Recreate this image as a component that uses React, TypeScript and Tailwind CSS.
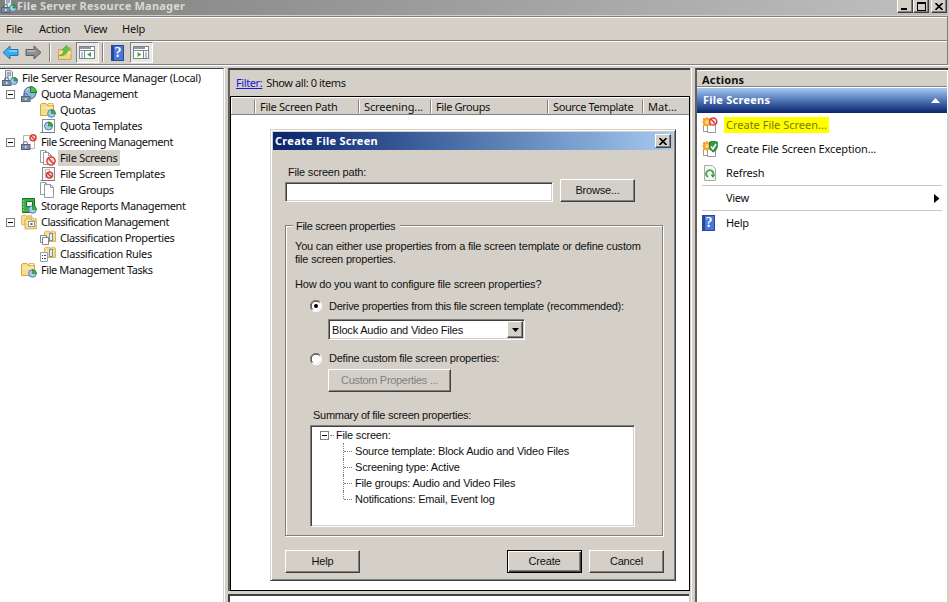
import clsx from 'clsx';
import type { ReactNode } from 'react';

const RAISED =
  'border border-t-white border-l-white border-r-[#404040] border-b-[#404040] shadow-[inset_-1px_-1px_0_#808080]';
const SUNKEN =
  'border border-t-[#808080] border-l-[#808080] border-r-white border-b-white shadow-[inset_1px_1px_0_#404040,inset_-1px_-1px_0_#d4d0c8]';

/* ---------- icons ---------- */

function Svg({ children, w = 16, h = 16 }: { children: ReactNode; w?: number; h?: number }) {
  return (
    <svg width={w} height={h} viewBox={`0 0 ${w} ${h}`} className="block shrink-0">
      {children}
    </svg>
  );
}

function Pie({ x, y, r }: { x: number; y: number; r: number }) {
  return (
    <g>
      <circle cx={x} cy={y} r={r} fill="#a9cbe6" stroke="#4a7fb5" />
      <path d={`M${x} ${y}V${y - r}A${r} ${r} 0 0 1 ${x + r} ${y}Z`} fill="#35b535" stroke="#1c7a2a" strokeWidth="0.6" />
    </g>
  );
}

function Lock() {
  return (
    <g>
      <path d="M2.5 11V9.5a2 2 0 0 1 4 0V11" fill="none" stroke="#5c6b7c" />
      <rect x="0.5" y="10.5" width="8.5" height="5" fill="#7b8da1" stroke="#56667a" />
      <path d="M4 12h1.5v2H4z" fill="#dfe6ee" />
    </g>
  );
}

function Ban({ x, y, r }: { x: number; y: number; r: number }) {
  return (
    <g>
      <circle cx={x} cy={y} r={r} fill="#fbe3e0" stroke="#d5443f" strokeWidth="1.5" />
      <path d={`M${x - r * 0.7} ${y - r * 0.7}L${x + r * 0.7} ${y + r * 0.7}`} stroke="#d5443f" strokeWidth="1.5" />
    </g>
  );
}

function Folder({ x = 0, y = 0, s = 1 }: { x?: number; y?: number; s?: number }) {
  return (
    <g transform={`translate(${x} ${y}) scale(${s})`}>
      <path d="M0.5 13.5V2.5L2 1.5h4l1 1.5h6.5v10.5z" fill="#f5dc8e" stroke="#d3a947" />
      <path d="M8 1.5h5v2H8z" fill="#fff5cf" stroke="#cf9f35" strokeWidth="0.7" />
      <path d="M1.5 6h11" stroke="#fdf0bd" />
    </g>
  );
}

function Page({ x, y, w = 9, h = 12 }: { x: number; y: number; w?: number; h?: number }) {
  return (
    <path
      d={`M${x} ${y}h${w - 3}l3 3v${h - 3}h${-w}zM${x + w - 3} ${y}v3h3`}
      fill="#fff"
      stroke="#8a9099"
      strokeWidth="0.9"
    />
  );
}

function ServerIcon() {
  return (
    <Svg>
      <path d="M3.5 0.5h5l2 1.500v9h-7z" fill="#e5e9ed" stroke="#7c8894" />
      <path d="M5 3h4M5 5h4" stroke="#5b7288" />
      <path d="M5 7h2" stroke="#35b535" />
      <Lock />
      <Pie x={12} y={11} r={3.5} />
    </Svg>
  );
}

function QuotaIcon() {
  return (
    <Svg>
      <circle cx="9" cy="7" r="6" fill="#8db5e0" stroke="#3a669b" />
      <path d="M9.5 6.500V0.500A6 6 0 0 1 15.500 6.500z" fill="#4cc24c" stroke="#1c7a2a" />
      <path d="M5 4.500a5 5 0 0 1 3-2" fill="none" stroke="#d5e6f7" />
      <Lock />
    </Svg>
  );
}

function QuotaFolderIcon() {
  return (
    <Svg>
      <Folder />
      <Pie x={11.5} y={11.5} r={3.8} />
    </Svg>
  );
}

function QuotaTemplateIcon() {
  return (
    <Svg>
      <rect x="2.5" y="1.5" width="12" height="13" fill="#fff" stroke="#8b8b8b" />
      <path d="M0.5 14.5h14" stroke="#767676" />
      <Pie x={8.5} y={8} r={4} />
    </Svg>
  );
}

function ScreeningIcon() {
  return (
    <Svg>
      <path d="M2.5 1.5h11v13h-11z" fill="#fff" stroke="#b5b5b5" />
      <Lock />
      <Ban x={12} y={3.8} r={3} />
    </Svg>
  );
}

function FileScreensIcon() {
  return (
    <Svg>
      <Page x={0.5} y={0.5} w={8} />
      <Page x={3.5} y={2.5} w={8} />
      <Ban x={11} y={11} r={4.1} />
    </Svg>
  );
}

function ScreenTemplateIcon() {
  return (
    <Svg>
      <rect x="2.5" y="1.5" width="12" height="13" fill="#f6f6f6" stroke="#8a8a8a" />
      <path d="M0.5 14.5h14" stroke="#767676" />
      <path d="M5.5 3.5h4v8h-4z" fill="#fff" stroke="#999" strokeWidth="0.7" />
      <Ban x={9.5} y={9} r={3} />
    </Svg>
  );
}

function FileGroupsIcon() {
  return (
    <Svg>
      <Page x={0.5} y={0.5} w={8} />
      <Page x={4.5} y={2.5} w={9} h={13} />
    </Svg>
  );
}

function ReportsIcon() {
  return (
    <Svg>
      <path d="M1.5 0.5h12v14h-12z" fill="#3fae49" stroke="#17702a" />
      <path d="M0 3h3M0 6h3M0 9h3M0 12h3" stroke="#9fd6a4" />
      <path d="M5.5 3.5h6v5h-6z" fill="#e6f4e7" stroke="#17702a" />
      <Pie x={11.5} y={11.5} r={3.8} />
    </Svg>
  );
}

function ClassificationIcon() {
  return (
    <Svg>
      <Folder s={0.8} />
      <Folder x={3.5} y={3} s={0.88} />
      <rect x="7.5" y="7.5" width="6" height="5" fill="#fff" stroke="#8c96a3" />
      <path d="M9 10h3M10.5 9v2" stroke="#3d6c99" />
    </Svg>
  );
}

function ClassPropsIcon() {
  return (
    <Svg>
      <Folder x={4} s={0.85} />
      <rect x="9.5" y="3.5" width="3" height="7" fill="#e8eef5" stroke="#7d8da0" />
      <path d="M0.5 5.5h6v7h-6z" fill="#fff" stroke="#7b8794" />
      <path d="M2.5 7.5h6v7h-6z" fill="#fff" stroke="#7b8794" />
    </Svg>
  );
}

function ClassRulesIcon() {
  return (
    <Svg>
      <Folder x={4} s={0.85} />
      <rect x="9.5" y="3.5" width="3" height="7" fill="#e8eef5" stroke="#7d8da0" />
      <path d="M0.5 6.5h7v9h-7z" fill="#fff" stroke="#9aa3ad" />
      <path d="M2 9.5h1M4 9.5h2M2 12.5h1M4 12.5h2" stroke="#444" />
    </Svg>
  );
}

function Burst() {
  return (
    <g>
      <path d="M1 1h8v8H1z" fill="#fbb84a" />
      <path d="M5 0v10M0 5h10M1.500 1.500l7 7M8.500 1.500l-7 7" stroke="#f39a1c" strokeWidth="1.2" />
      <circle cx="5" cy="5" r="2" fill="#ffd873" />
    </g>
  );
}

function NewScreenIcon() {
  return (
    <Svg>
      <Page x={1.5} y={2.5} w={8} h={12} />
      <Page x={5.5} y={3.5} w={8} h={12} />
      <Burst />
      <Ban x={11.2} y={4.5} r={3.6} />
    </Svg>
  );
}

function NewExceptionIcon() {
  return (
    <Svg>
      <Page x={1.5} y={2.5} w={8} h={12} />
      <Page x={5.5} y={3.5} w={8} h={12} />
      <Burst />
      <path
        d="M7.5 1l3.5-.7 4.300.7v4.500c0 2.500-2 4.500-4 5.500-2-1-3.800-3-3.800-5.500z"
        fill="#2f9e3c"
        stroke="#176b27"
        strokeWidth="0.8"
      />
      <path d="M9 5.500l2 2.500 3-5" fill="none" stroke="#fff" strokeWidth="1.5" />
    </Svg>
  );
}

function RefreshIcon() {
  return (
    <Svg>
      <path d="M2.5 0.5h8l3 3v12h-11z" fill="#f2f8f1" stroke="#a3afa3" />
      <path d="M6 12A3.600 3.600 0 1 1 11.300 9.500" fill="none" stroke="#4aa555" strokeWidth="1.8" />
      <path d="M8.500 9.500h5L11 13z" fill="#3a9b45" />
    </Svg>
  );
}

function HelpIcon() {
  return (
    <span className="flex h-4 w-[13px] shrink-0 items-center justify-center border border-[#27479f] bg-linear-to-r from-[#27479f] from-15% to-[#4a78d6] to-20% pl-px font-['Liberation_Serif',serif] text-[14px] leading-none font-bold text-white">
      ?
    </span>
  );
}

function ArrowIcon({ forward = false }: { forward?: boolean }) {
  return (
    <Svg w={17} h={15}>
      <path
        d={forward ? 'M16 7.5L9 1v3.500H1v6h8V14z' : 'M1 7.5L8 1v3.500h8v6H8V14z'}
        fill={forward ? '#8f8f8f' : '#35adf0'}
        stroke={forward ? '#5d5d5d' : '#2a76b0'}
        strokeLinejoin="round"
      />
      <path d={forward ? 'M2 6h8' : 'M7 6h8'} stroke={forward ? '#bcbcbc' : '#8fd8fb'} strokeWidth="1.5" />
    </Svg>
  );
}

function FolderUpIcon() {
  return (
    <Svg>
      <path d="M1.5 14.5v-10h5l1-1.500h6.500v11.500z" fill="#f3d584" stroke="#c9a356" />
      <path d="M2 8h12" stroke="#fdeeb8" />
      <path
        d="M2.500 10.500C5.500 9.500 7 7.500 7 5H5L9.500 0.500 13 5h-2.500c0 3.500-3 6-8 5.500z"
        fill="#5fc93e"
        stroke="#4a9e36"
        strokeWidth="0.7"
      />
    </Svg>
  );
}

function PaneIcon({ right = false }: { right?: boolean }) {
  return (
    <Svg w={17} h={15}>
      <rect x="0.5" y="1.5" width="15" height="12" fill="#fff" stroke="#7b858f" />
      <path d="M1 3h11" stroke="#8796a8" strokeWidth="2" />
      <path d="M1 5.5h15" stroke="#7b858f" />
      <path d={right ? 'M10.5 5v9' : 'M5.5 5v9'} stroke="#7b858f" />
      <path d={right ? 'M12 8h2M12 10h2M12 12h2' : 'M2 8h2M2 10h2M2 12h2'} stroke="#6582a6" />
      <path d={right ? 'M4.500 7l4 2.500-4 2.500z' : 'M12 7l-4 2.500 4 2.500z'} fill="#3fab3f" />
    </Svg>
  );
}

/* ---------- main window ---------- */

function CaptionButton({ children, className }: { children: ReactNode; className?: string }) {
  return (
    <span className={clsx('flex h-[14px] w-4 items-center justify-center bg-[#d4d0c8]', RAISED, className)}>
      {children}
    </span>
  );
}

function CloseGlyph() {
  return (
    <Svg w={8} h={7}>
      <path d="M0.5 0l7 7M7.5 0l-7 7" stroke="#000" strokeWidth="1.600" />
    </Svg>
  );
}

function TitleBar() {
  return (
    <div className="flex h-[15px] items-start bg-linear-to-r from-[#808080] to-[#c0c0c0] pr-[2px]">
      <div className="-mt-[3px] ml-px">
        <ServerIcon />
      </div>
      <span className="h-[15px] text-[11px] leading-[12px] font-bold tracking-[0.2px] text-[#dbd8d1]">
        File Server Resource Manager
      </span>
      <div className="-mt-px ml-auto flex">
        <CaptionButton>
          <span className="mt-[6px] mr-[2px] h-[2px] w-[6px] bg-black" />
        </CaptionButton>
        <CaptionButton>
          <span className="h-[9px] w-[9px] border border-t-2 border-black" />
        </CaptionButton>
        <CaptionButton className="ml-[2px]">
          <CloseGlyph />
        </CaptionButton>
      </div>
    </div>
  );
}

function MenuBar() {
  return (
    <div className="mt-px mr-px h-6 border-t border-r border-[#808080]">
      <div className="flex h-[23px] border-t border-white pl-[6px] leading-[22px] tracking-[-0.2px]">
        <span className="w-[33px]">File</span>
        <span className="w-[45px]">Action</span>
        <span className="w-[38px]">View</span>
        <span>Help</span>
      </div>
    </div>
  );
}

function Separator() {
  return <span className="h-[19px] w-[2px] border-l border-[#808080] bg-white" />;
}

function Pressed({ children }: { children: ReactNode }) {
  return (
    <span className="flex h-[21px] w-[23px] items-center justify-center border border-t-[#808080] border-r-white border-b-white border-l-[#808080] bg-[#eae8e3]">
      {children}
    </span>
  );
}

function ToolBar() {
  return (
    <div className="mr-px flex h-[25px] items-center border border-l-0 border-[#808080] pl-[2px] shadow-[inset_0_1px_0_#fff]">
      <ArrowIcon />
      <span className="w-[6px]" />
      <ArrowIcon forward />
      <span className="w-[7px]" />
      <Separator />
      <span className="w-[6px]" />
      <FolderUpIcon />
      <span className="w-[3px]" />
      <Pressed>
        <PaneIcon />
      </Pressed>
      <span className="w-[3px]" />
      <Separator />
      <span className="w-[7px]" />
      <HelpIcon />
      <span className="w-[6px]" />
      <Pressed>
        <PaneIcon right />
      </Pressed>
    </div>
  );
}

interface TreeNode {
  label: string;
  level: number;
  icon: ReactNode;
  tracking: string;
  open?: boolean;
  selected?: boolean;
}

const TREE: TreeNode[] = [
  { label: 'File Server Resource Manager (Local)', level: 0, icon: <ServerIcon />, tracking: 'tracking-[-0.3px]' },
  { label: 'Quota Management', level: 1, icon: <QuotaIcon />, tracking: 'tracking-[-0.5px]', open: true },
  { label: 'Quotas', level: 2, icon: <QuotaFolderIcon />, tracking: 'tracking-[-0.35px]' },
  { label: 'Quota Templates', level: 2, icon: <QuotaTemplateIcon />, tracking: 'tracking-[-0.4px]' },
  { label: 'File Screening Management', level: 1, icon: <ScreeningIcon />, tracking: 'tracking-[-0.48px]', open: true },
  { label: 'File Screens', level: 2, icon: <FileScreensIcon />, tracking: 'tracking-[-0.25px]', selected: true },
  { label: 'File Screen Templates', level: 2, icon: <ScreenTemplateIcon />, tracking: 'tracking-[-0.3px]' },
  { label: 'File Groups', level: 2, icon: <FileGroupsIcon />, tracking: 'tracking-[-0.42px]' },
  { label: 'Storage Reports Management', level: 1, icon: <ReportsIcon />, tracking: 'tracking-[-0.42px]' },
  { label: 'Classification Management', level: 1, icon: <ClassificationIcon />, tracking: 'tracking-[-0.48px]', open: true },
  { label: 'Classification Properties', level: 2, icon: <ClassPropsIcon />, tracking: 'tracking-[-0.38px]' },
  { label: 'Classification Rules', level: 2, icon: <ClassRulesIcon />, tracking: 'tracking-[-0.33px]' },
  { label: 'File Management Tasks', level: 1, icon: <QuotaFolderIcon />, tracking: 'tracking-[-0.42px]' },
];

function Expander() {
  return (
    <span className="flex h-[9px] w-[9px] shrink-0 items-center justify-center border border-[#808080] bg-white">
      <span className="h-px w-[5px] bg-black" />
    </span>
  );
}

function ConsoleTree() {
  return (
    <div className="w-[224px] shrink-0 border-t border-r border-t-[#404040] border-r-[#d4d0c8] bg-white pt-px">
      {TREE.map((node) => (
        <div key={node.label} className="flex h-4 items-center">
          <span
            className={clsx(
              'flex shrink-0 items-center',
              node.level === 0 && 'w-[2px]',
              node.level === 1 && 'w-[21px] pl-[6px]',
              node.level === 2 && 'w-[40px]',
            )}
          >
            {node.open && <Expander />}
          </span>
          {node.icon}
          <span
            className={clsx(
              'h-4 leading-4 whitespace-nowrap',
              node.level === 0 ? 'pl-[4px]' : 'ml-[2px] px-[2px]',
              node.selected && 'bg-[#d4d0c8]',
              node.tracking,
            )}
          >
            {node.label}
          </span>
        </div>
      ))}
    </div>
  );
}

function Column({ label, className }: { label?: string; className: string }) {
  return (
    <span className={clsx('h-[17px] shrink-0 py-[2px]', className)}>
      <span className="block h-[13px] border-l border-[#808080] pl-[5px] leading-[13px] whitespace-nowrap shadow-[inset_1px_0_0_#fff]">
        {label}
      </span>
    </span>
  );
}

function ResultPane() {
  return (
    <div className="flex w-[468px] shrink-0 flex-col border-r border-l border-white">
      <div className="mr-px ml-[3px] flex h-[523px] flex-col border-t-2 border-l-2 border-t-[#404040] border-l-[#606060]">
        <div className="h-[26px] pl-[6px] leading-[26px] tracking-[-0.4px]">
          <span className="text-[#1818d8] underline">Filter:</span>
          <span className="pl-1">Show all: 0 items</span>
        </div>
        <div className="w-[460px] flex-1 border border-black bg-white">
          <div className="flex h-[18px] overflow-hidden border-t border-b border-t-white border-b-[#808080] bg-[#d4d0c8]">
            <span className="w-[23px] shrink-0 border-l border-white" />
            <Column label="File Screen Path" className="w-[104px] tracking-[-0.27px]" />
            <Column label="Screening..." className="w-[72px] tracking-[-0.1px]" />
            <Column label="File Groups" className="w-[117px] tracking-[-0.4px]" />
            <Column label="Source Template" className="w-[95px] tracking-[-0.38px]" />
            <Column label="Mat..." className="w-[45px]" />
          </div>
        </div>
      </div>
      <div className="mt-[3px] mr-[2px] ml-[3px] flex-1 border-t-2 border-l-2 border-[#404040] bg-white" />
    </div>
  );
}

function ActionRow({ icon, children }: { icon?: ReactNode; children: ReactNode }) {
  return (
    <div className="flex h-6 items-center">
      <span className="flex w-[22px] shrink-0">{icon}</span>
      {children}
    </div>
  );
}

function ActionsPane() {
  return (
    <div className="ml-[3px] flex w-[253px] shrink-0 flex-col border-t-2 border-l-2 border-t-[#404040] border-l-[#606060] bg-white">
      <div className="mr-px h-[17px] border-t border-b border-t-white border-b-[#808080] bg-[#d4d0c8] pl-[5px] leading-[17px] font-bold tracking-[0.2px]">
        Actions
      </div>
      <div className="mt-px mr-px flex h-[25px] items-center justify-between bg-linear-to-b from-[#a6caf0] via-[#4a6cb0] via-55% to-[#0a246a] pr-[7px] pl-[6px] font-bold tracking-[0.25px] text-white">
        File Screens
        <Svg w={9} h={5}>
          <path d="M0 5l4.500-5L9 5z" fill="#fff" />
        </Svg>
      </div>
      <div className="flex flex-1 flex-col border-r border-[#d4d0c8] pr-[5px] pl-[5px]">
        <ActionRow icon={<NewScreenIcon />}>
          <span className="h-4 bg-[#ffff00] px-[2px] leading-[15px] text-[#77770c]">Create File Screen...</span>
        </ActionRow>
        <ActionRow icon={<NewExceptionIcon />}>
          <span className="pl-[2px] tracking-[-0.12px]">Create File Screen Exception...</span>
        </ActionRow>
        <ActionRow icon={<RefreshIcon />}>
          <span className="pl-[2px] tracking-[-0.15px]">Refresh</span>
        </ActionRow>
        <div className="h-px bg-[#c8c5be]" />
        <ActionRow>
          <span className="flex-1 pl-[2px] tracking-[-0.3px]">View</span>
          <Svg w={6} h={9}>
            <path d="M0 0l5.500 4.500L0 9z" />
          </Svg>
          <span className="w-[2px]" />
        </ActionRow>
        <div className="h-px bg-[#c8c5be]" />
        <ActionRow icon={<HelpIcon />}>
          <span className="pl-[2px] tracking-[-0.3px]">Help</span>
        </ActionRow>
      </div>
    </div>
  );
}

/* ---------- dialog ---------- */

function Button({ children, className }: { children: ReactNode; className?: string }) {
  return (
    <button type="button" className={clsx('h-[23px] shrink-0 bg-[#d4d0c8]', className ?? clsx('w-[75px]', RAISED))}>
      {children}
    </button>
  );
}

function Radio({ checked = false }: { checked?: boolean }) {
  return (
    <Svg w={12} h={12}>
      <circle cx="6" cy="6" r="5" fill="#fff" />
      <path d="M1.900 10.100A5.500 5.500 0 0 1 10.100 1.900" fill="none" stroke="#808080" />
      <path d="M2.600 9.400A4.500 4.500 0 0 1 9.400 2.600" fill="none" stroke="#404040" />
      <path d="M10.100 1.900A5.500 5.500 0 0 1 1.900 10.100" fill="none" stroke="#fff" />
      {checked && <circle cx="6" cy="6" r="2" />}
    </Svg>
  );
}

const SUMMARY = [
  'Source template: Block Audio and Video Files',
  'Screening type: Active',
  'File groups: Audio and Video Files',
  'Notifications: Email, Event log',
];

function SummaryTree() {
  return (
    <div className={clsx('h-[102px] w-[325px] bg-white pt-px pl-[9px]', SUNKEN)}>
      <div className="flex h-4 items-center">
        <Expander />
        <span className="mr-[2px] ml-px w-[4px] border-t border-dotted border-[#808080]" />
        File screen:
      </div>
      {SUMMARY.map((line, i) => (
        <div key={line} className="flex h-4 pl-[23px]">
          <span
            className={clsx('border-l border-dotted border-[#808080]', i === SUMMARY.length - 1 ? 'h-2' : 'h-4')}
          />
          <span className="mt-2 mr-[3px] h-0 w-[8px] border-t border-dotted border-[#808080]" />
          <span className="leading-4">{line}</span>
        </div>
      ))}
    </div>
  );
}

function CreateFileScreenDialog() {
  return (
    <div className="absolute top-[129px] left-[270px] h-[452px] w-[406px] border border-t-[#d4d0c8] border-r-[#404040] border-b-[#404040] border-l-[#d4d0c8] bg-[#d4d0c8] p-[2px] font-['Liberation_Sans',sans-serif] tracking-[-0.19px] shadow-[inset_1px_1px_0_#fff,inset_-1px_-1px_0_#808080]">
      <div className="flex h-[18px] items-center justify-between bg-linear-to-r from-[#0a246a] to-[#a6caf0] pr-[2px] pl-[2px] font-['Noto_Sans',sans-serif] font-bold tracking-[0.28px] text-white">
        Create File Screen
        <CaptionButton>
          <CloseGlyph />
        </CaptionButton>
      </div>

      <div className="pt-[14px] pl-[12px]">
        <label className="block h-[15px] pl-[3px] leading-4">File screen path:</label>
        <div className="flex items-end">
          <div className={clsx('mr-[7px] h-5 w-[268px] bg-white', SUNKEN)} />
          <Button>Browse...</Button>
        </div>

        <div className="mt-[23px] h-[311px] w-[378px] border border-[#808080] shadow-[inset_1px_1px_0_#fff,1px_1px_0_#fff]">
          <div className="-mt-[7px] ml-[7px] h-[14px] w-[107px] bg-[#d4d0c8] pl-[3px] leading-[14px] tracking-[-0.3px] whitespace-nowrap">
            File screen properties
          </div>
          <p className="mt-[7px] ml-[9px] leading-[13px] whitespace-nowrap">
            You can either use properties from a file screen template or define custom
            <br />
            file screen properties.
          </p>
          <p className="mt-[12px] ml-[9px] leading-[13px]">How do you want to configure file screen properties?</p>

          <div className="mt-[8px] ml-6 flex h-[14px] items-center gap-[7px] tracking-[-0.26px] whitespace-nowrap">
            <Radio checked />
            Derive properties from this file screen template (recommended):
          </div>
          <div className={clsx('mt-[6px] ml-[42px] flex h-[21px] w-[197px] bg-white p-px', SUNKEN)}>
            <span className="flex-1 pl-[2px] leading-[18px]">Block Audio and Video Files</span>
            <span className={clsx('flex h-[17px] w-4 items-center justify-center bg-[#d4d0c8]', RAISED)}>
              <Svg w={7} h={4}>
                <path d="M0 0h7L3.500 4z" />
              </Svg>
            </span>
          </div>

          <div className="mt-[11px] ml-6 flex h-[15px] items-center gap-[7px] tracking-[-0.22px]">
            <Radio />
            Define custom file screen properties:
          </div>
          <div className="mt-[3px] ml-[42px] tracking-[-0.3px] text-[#808080] [text-shadow:1px_1px_0_#fff]">
            <Button className={clsx(RAISED, 'w-[123px]')}>Custom Properties ...</Button>
          </div>

          <div className="mt-[16px] ml-[27px] leading-[14px] tracking-[-0.28px]">Summary of file screen properties:</div>
          <div className="mt-[3px] ml-6">
            <SummaryTree />
          </div>
        </div>

        <div className="mt-[14px] flex">
          <Button>Help</Button>
          <span className="w-[147px] shrink-0" />
          <Button className="w-[75px] border border-black shadow-[inset_1px_1px_0_#fff,inset_-1px_-1px_0_#404040,inset_-2px_-2px_0_#808080]">
            Create
          </Button>
          <span className="w-[7px] shrink-0" />
          <Button>Cancel</Button>
        </div>
      </div>
    </div>
  );
}

export default function App() {
  return (
    <div className="relative flex h-[602px] w-[949px] flex-col overflow-hidden bg-[#d4d0c8] font-['Noto_Sans',sans-serif] text-[11px] text-[#101010]">
      <TitleBar />
      <MenuBar />
      <ToolBar />
      <div className="flex flex-1 border-t border-white pt-[2px]">
        <ConsoleTree />
        <ResultPane />
        <ActionsPane />
      </div>
      <CreateFileScreenDialog />
    </div>
  );
}
